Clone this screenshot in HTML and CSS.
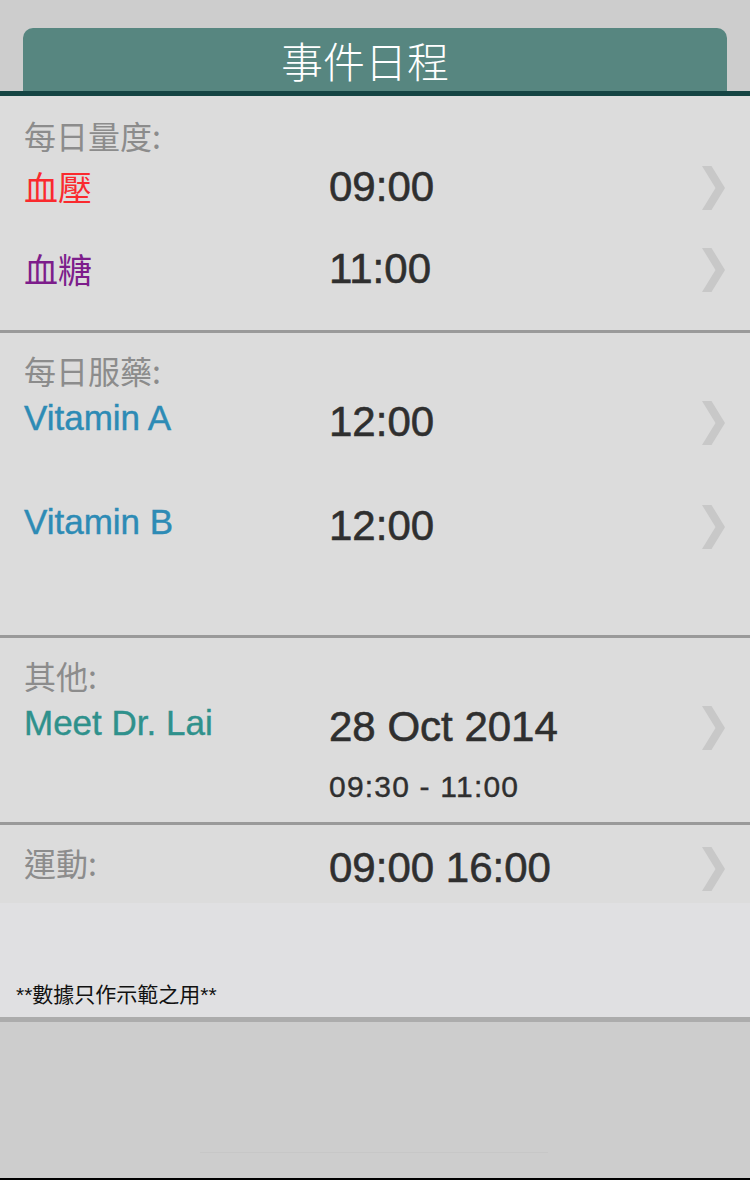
FILE: index.html
```html
<!DOCTYPE html>
<html lang="zh-Hant">
<head>
<meta charset="utf-8">
<title>事件日程</title>
<link rel="stylesheet" href="styles.css">
</head>
<body>
<div class="screen">
  <header class="topbar">
    <div class="tab"><h1 class="title">事件日程</h1></div>
  </header>
  <div class="rule-dark"></div>
  <main class="list">
    <section class="group g1">
      <div class="group-label">每日量度:</div>
      <div class="row row-82">
        <div class="name cjk red">血壓</div>
        <div class="when"><div class="time">09:00</div></div>
        <svg class="chev" viewBox="0 0 23 44"><path d="M0 0h9.5l13.5 22-13.5 22H0l13.5-22z"/></svg>
      </div>
      <div class="row row-82">
        <div class="name cjk purple">血糖</div>
        <div class="when"><div class="time">11:00</div></div>
        <svg class="chev" viewBox="0 0 23 44"><path d="M0 0h9.5l13.5 22-13.5 22H0l13.5-22z"/></svg>
      </div>
    </section>
    <section class="group g2">
      <div class="group-label">每日服藥:</div>
      <div class="row row-104">
        <div class="name blue">Vitamin A</div>
        <div class="when"><div class="time">12:00</div></div>
        <svg class="chev" viewBox="0 0 23 44"><path d="M0 0h9.5l13.5 22-13.5 22H0l13.5-22z"/></svg>
      </div>
      <div class="row row-104">
        <div class="name blue">Vitamin B</div>
        <div class="when"><div class="time">12:00</div></div>
        <svg class="chev" viewBox="0 0 23 44"><path d="M0 0h9.5l13.5 22-13.5 22H0l13.5-22z"/></svg>
      </div>
    </section>
    <section class="group g3">
      <div class="group-label">其他:</div>
      <div class="row">
        <div class="name teal">Meet Dr. Lai</div>
        <div class="when">
          <div class="time">28 Oct 2014</div>
          <div class="sub">09:30 - 11:00</div>
        </div>
        <svg class="chev" viewBox="0 0 23 44"><path d="M0 0h9.5l13.5 22-13.5 22H0l13.5-22z"/></svg>
      </div>
    </section>
    <section class="group g4">
      <div class="row">
        <div class="group-label inline">運動:</div>
        <div class="when"><div class="time">09:00 16:00</div></div>
        <svg class="chev" viewBox="0 0 23 44"><path d="M0 0h9.5l13.5 22-13.5 22H0l13.5-22z"/></svg>
      </div>
    </section>
  </main>
  <div class="footer"><p class="note">**數據只作示範之用**</p></div>
  <div class="bottom-rule"></div>
  <div class="bottom"><div class="faint"></div></div>
</div>
</body>
</html>
```

FILE: styles.css
```css
html, body {
  margin: 0;
  padding: 0;
}
body {
  background: #cdcdcd;
  font-family: "Liberation Sans", "Noto Sans CJK TC", sans-serif;
}
.screen {
  width: 750px;
  height: 1180px;
  overflow: hidden;
  display: flex;
  flex-direction: column;
}
.topbar {
  padding: 28px 23px 0;
}
.tab {
  height: 63px;
  background: #578680;
  border-radius: 10px 10px 0 0;
  display: flex;
  align-items: center;
  justify-content: center;
  padding-right: 20px;
}
.title {
  margin: 0;
  font-family: "Noto Sans CJK TC", sans-serif;
  font-weight: 300;
  font-size: 42px;
  line-height: 1;
  color: #ffffff;
}
.rule-dark {
  height: 5px;
  background: #154443;
}
.list {
  background: #dcdcdc;
}
.group {
  padding: 19px 0 0 24px;
}
.group + .group {
  border-top: 3px solid #9a9a9a;
}
.g1 { padding-top: 21px; padding-bottom: 3px; }
.g2 { padding-bottom: 29px; }
.g3 { padding-bottom: 17px; }
.g4 { padding-bottom: 11px; }

.group-label {
  font-family: "Noto Sans CJK TC", sans-serif;
  font-size: 32px;
  line-height: 36px;
  color: #8c8c8c;
  margin-bottom: 10px;
}
.group-label.inline {
  margin-bottom: 0;
}
.row {
  display: grid;
  grid-template-columns: 305px 1fr 23px;
  padding-right: 25px;
  align-items: start;
}
.row-82 { height: 82px; }
.row-104 { height: 104px; }

.name {
  font-size: 35px;
  line-height: 40px;
  -webkit-text-stroke: 0.4px;
}
.name.cjk {
  font-family: "Noto Sans CJK TC", sans-serif;
  font-size: 34px;
  line-height: 48px;
  -webkit-text-stroke: 0;
}
.red { color: #fa2a2e; }
.purple { color: #7d1d8b; }
.blue { color: #2d8bb5; }
.teal { color: #2f918c; }

.time {
  font-size: 42px;
  line-height: 48px;
  color: #2f2f2f;
  -webkit-text-stroke: 0.6px;
}
.sub {
  font-size: 30px;
  line-height: 36px;
  margin-top: 18px;
  letter-spacing: 1.2px;
  color: #2f2f2f;
  -webkit-text-stroke: 0.4px;
}
.chev {
  width: 23px;
  height: 44px;
  margin-top: 3px;
  fill: #c8c8c8;
}
.footer {
  height: 114px;
  background: #e0e0e2;
  display: flex;
  align-items: flex-end;
  padding: 0 16px 10px;
  box-sizing: border-box;
}
.note {
  margin: 0;
  font-size: 21px;
  line-height: 24px;
  color: #111111;
}
.bottom-rule {
  height: 5px;
  background: #acacac;
}
.bottom {
  flex: 1;
  background: #cdcdcd;
  border-bottom: 2px solid #000000;
  padding-top: 130px;
  box-sizing: border-box;
}
.faint {
  margin-left: 200px;
  width: 348px;
  height: 1px;
  background: #c7c7c7;
}
```
